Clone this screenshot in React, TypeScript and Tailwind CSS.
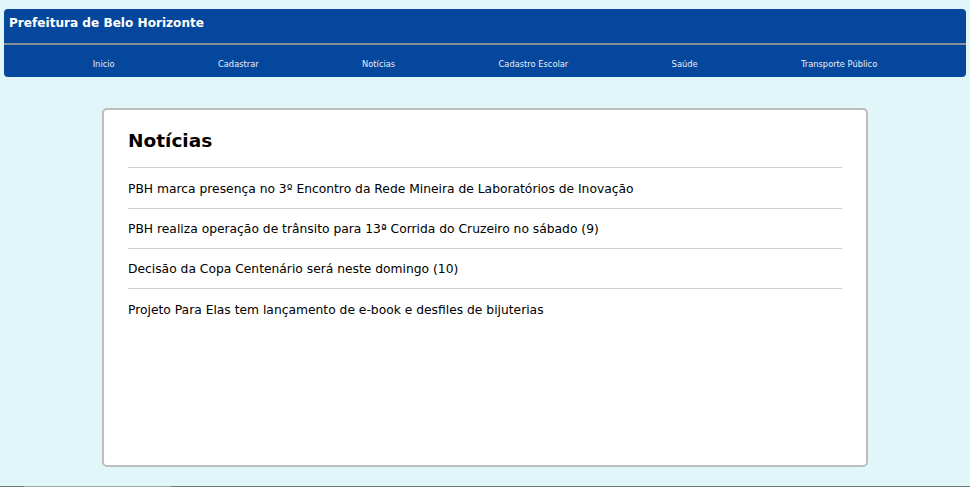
import React from "react";

const nav = ["Inicio", "Cadastrar", "Notícias", "Cadastro Escolar", "Saúde", "Transporte Público"];
const news = [
  "PBH marca presença no 3º Encontro da Rede Mineira de Laboratórios de Inovação",
  "PBH realiza operação de trânsito para 13ª Corrida do Cruzeiro no sábado (9)",
  "Decisão da Copa Centenário será neste domingo (10)",
  "Projeto Para Elas tem lançamento de e-book e desfiles de bijuterias",
];

export default function App() {
  return (
    <div className="h-[487px] bg-[#e0f6f8] flex flex-col overflow-hidden" style={{ fontFamily: '"DejaVu Sans", Verdana, sans-serif' }}>
      <div className="pt-[9px] px-[4px]">
        <header className="bg-[#05479c] rounded-[4px] text-white">
          <div className="h-[36px] border-b-2 border-[#8a9099] px-[5px] pt-[6px]">
            <h1 className="text-[12.1px] font-bold leading-[16px]">Prefeitura de Belo Horizonte</h1>
          </div>
          <nav className="h-[32px] flex items-center justify-around px-[37px] pt-[6px] text-[8.3px] text-[#e8eef8]">
            {nav.map((n) => (
              <span key={n}>{n}</span>
            ))}
          </nav>
        </header>
      </div>
      <main className="flex-1 flex justify-center pt-[31px] pb-[19px]">
        <div className="w-[766px] bg-white border-2 border-[#bdbdbd] rounded-[5px] px-[24px] pt-[19px]">
          <h2 className="text-[18.5px] font-bold leading-[24px] text-black pb-[14px] border-b border-[#cfcfcf]">Notícias</h2>
          <ul className="mt-[1px]">
            {news.map((t, i) => (
              <li key={i} className={`h-[40px] pt-[2px] flex items-center text-[12.3px] text-black ${i < news.length - 1 ? "border-b border-[#cfcfcf]" : ""}`}>
                {t}
              </li>
            ))}
          </ul>
        </div>
      </main>
      <div className="h-px flex">
        <div className="w-[24px] bg-[#6b7979]" />
        <div className="w-[147px] bg-[#9aa9a9]" />
        <div className="flex-1 bg-[#6b7979]" />
      </div>
    </div>
  );
}
